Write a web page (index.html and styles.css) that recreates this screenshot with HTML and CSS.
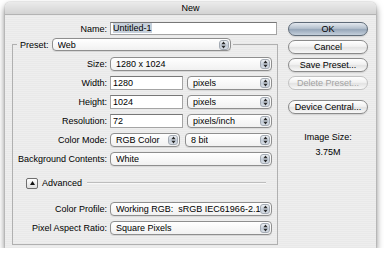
FILE: index.html
```html
<!DOCTYPE html>
<html lang="en">
<head>
    <meta charset="UTF-8">
    <title>New</title>
    <link rel="stylesheet" href="styles.css">
</head>
<body>

    <div class="window">
        <div class="titlebar">New</div>

        <div class="content">
            <div class="main">
                <div class="row name-row">
                    <label>Name:</label>
                    <div class="field wide"><span class="selected">Untitled-1</span></div>
                </div>

                <fieldset class="group">
                    <legend>
                        <label>Preset:</label>
                        <div class="select preset"><span>Web</span><i class="arrows"><svg width="5" height="8" viewBox="0 0 5 8"><path d="M2.5 0.5L4.6 3.2H0.4z M2.5 7.5L4.6 4.8H0.4z"/></svg></i></div>
                    </legend>

                    <div class="row">
                        <label>Size:</label>
                        <div class="select"><span>1280 x 1024</span><i class="arrows"><svg width="5" height="8" viewBox="0 0 5 8"><path d="M2.5 0.5L4.6 3.2H0.4z M2.5 7.5L4.6 4.8H0.4z"/></svg></i></div>
                    </div>
                    <div class="row">
                        <label>Width:</label>
                        <div class="pair">
                            <div class="field">1280</div>
                            <div class="select"><span>pixels</span><i class="arrows"><svg width="5" height="8" viewBox="0 0 5 8"><path d="M2.5 0.5L4.6 3.2H0.4z M2.5 7.5L4.6 4.8H0.4z"/></svg></i></div>
                        </div>
                    </div>
                    <div class="row">
                        <label>Height:</label>
                        <div class="pair">
                            <div class="field">1024</div>
                            <div class="select"><span>pixels</span><i class="arrows"><svg width="5" height="8" viewBox="0 0 5 8"><path d="M2.5 0.5L4.6 3.2H0.4z M2.5 7.5L4.6 4.8H0.4z"/></svg></i></div>
                        </div>
                    </div>
                    <div class="row">
                        <label>Resolution:</label>
                        <div class="pair">
                            <div class="field">72</div>
                            <div class="select"><span>pixels/inch</span><i class="arrows"><svg width="5" height="8" viewBox="0 0 5 8"><path d="M2.5 0.5L4.6 3.2H0.4z M2.5 7.5L4.6 4.8H0.4z"/></svg></i></div>
                        </div>
                    </div>
                    <div class="row">
                        <label>Color Mode:</label>
                        <div class="pair mode">
                            <div class="select"><span>RGB Color</span><i class="arrows"><svg width="5" height="8" viewBox="0 0 5 8"><path d="M2.5 0.5L4.6 3.2H0.4z M2.5 7.5L4.6 4.8H0.4z"/></svg></i></div>
                            <div class="select"><span>8 bit</span><i class="arrows"><svg width="5" height="8" viewBox="0 0 5 8"><path d="M2.5 0.5L4.6 3.2H0.4z M2.5 7.5L4.6 4.8H0.4z"/></svg></i></div>
                        </div>
                    </div>
                    <div class="row">
                        <label>Background Contents:</label>
                        <div class="select"><span>White</span><i class="arrows"><svg width="5" height="8" viewBox="0 0 5 8"><path d="M2.5 0.5L4.6 3.2H0.4z M2.5 7.5L4.6 4.8H0.4z"/></svg></i></div>
                    </div>

                    <div class="advanced">
                        <span class="disclosure"><svg width="5" height="4" viewBox="0 0 5 4"><path d="M2.5 0L5 4H0z"/></svg></span>
                        <span>Advanced</span>
                        <span class="rule"></span>
                    </div>

                    <div class="row">
                        <label>Color Profile:</label>
                        <div class="select"><span>Working RGB:&nbsp; sRGB IEC61966-2.1</span><i class="arrows"><svg width="5" height="8" viewBox="0 0 5 8"><path d="M2.5 0.5L4.6 3.2H0.4z M2.5 7.5L4.6 4.8H0.4z"/></svg></i></div>
                    </div>
                    <div class="row">
                        <label>Pixel Aspect Ratio:</label>
                        <div class="select"><span>Square Pixels</span><i class="arrows"><svg width="5" height="8" viewBox="0 0 5 8"><path d="M2.5 0.5L4.6 3.2H0.4z M2.5 7.5L4.6 4.8H0.4z"/></svg></i></div>
                    </div>
                </fieldset>
            </div>

            <div class="side">
                <div class="btn default">OK</div>
                <div class="btn">Cancel</div>
                <div class="btn">Save Preset...</div>
                <div class="btn disabled">Delete Preset...</div>
                <div class="btn central">Device Central...</div>

                <div class="image-size">
                    <p>Image Size:</p>
                    <p>3.75M</p>
                </div>
            </div>
        </div>
    </div>

</body>
</html>
```

FILE: styles.css
```css
body {
    margin: 0;
    background: #fff;
    font-family: "Liberation Sans", Arial, sans-serif;
    font-size: 9px;
    color: #000;
}
.window {
    margin: 2px 0 0 5px;
    width: 371px;
    height: 246px;
    border-radius: 5px 5px 0 0;
    background: repeating-linear-gradient(#eeeeee 0 1px, #e9e9e9 1px 2px);
    box-shadow: 0 4px 7px rgba(0, 0, 0, 0.55), 0 0 1px rgba(0, 0, 0, 0.5);
    overflow: hidden;
}
.titlebar {
    height: 13px;
    line-height: 13px;
    text-align: center;
    background: linear-gradient(#ebebeb, #d3d3d3);
    border-bottom: 1px solid #b3b3b3;
    box-sizing: border-box;
}
.content {
    display: flex;
    padding: 7px 0 0 7px;
}
.main {
    width: 266px;
}
.row {
    display: grid;
    grid-template-columns: 94px 162px;
    column-gap: 3px;
    align-items: center;
    height: 14px;
    margin-bottom: 5px;
}
.row label {
    text-align: right;
    white-space: nowrap;
}
.name-row {
    grid-template-columns: 95px 167px;
    height: 13px;
    margin-bottom: 0;
}
.field {
    height: 14px;
    line-height: 12px;
    box-sizing: border-box;
    border: 1px solid #a4a4a4;
    border-top-color: #777;
    background: #fff;
    padding-left: 2px;
}
.field.wide {
    height: 13px;
    line-height: 11px;
}
.selected {
    background: #c7d0db;
}
.group {
    margin: 3px 0 0;
    padding: 6px 5px 4px 0;
    border: 1px solid #b0b0b0;
    width: 266px;
    box-sizing: border-box;
}
.group legend {
    display: flex;
    align-items: center;
    gap: 3px;
    margin-left: 4px;
    padding: 0 2px 0 3px;
}
.select {
    display: flex;
    align-items: center;
    height: 14px;
    box-sizing: border-box;
    border: 1px solid #8e8e8e;
    border-radius: 4px;
    background: linear-gradient(#ffffff, #f1f1f1);
    padding-left: 5px;
    box-shadow: 0 1px 0 rgba(0, 0, 0, 0.08);
}
.select span {
    white-space: nowrap;
    overflow: hidden;
}
.preset {
    width: 179px;
    height: 13px;
}
.arrows {
    margin-left: auto;
    width: 10px;
    height: 10px;
    margin-right: 1px;
    display: flex;
    align-items: center;
    justify-content: center;
    border-radius: 3px;
    background: linear-gradient(#eef1f5, #c3ccd7 55%, #d8dee6);
    border: 1px solid #a3aab3;
    box-sizing: border-box;
}
.arrows svg {
    fill: #2a2a2a;
}
.pair {
    display: grid;
    grid-template-columns: 73px 1fr;
    gap: 4px;
}
.pair.mode {
    grid-template-columns: 70px 1fr;
    gap: 5px;
}
.advanced {
    display: flex;
    align-items: center;
    gap: 4px;
    height: 12px;
    margin: 11px 6px 13px 13px;
}
.disclosure {
    width: 12px;
    height: 11px;
    box-sizing: border-box;
    border: 1px solid #6f6f6f;
    border-radius: 2px;
    background: linear-gradient(#ffffff, #dedede);
    display: flex;
    align-items: center;
    justify-content: center;
}
.disclosure svg {
    fill: #111;
}
.rule {
    flex: 1;
    height: 1px;
    margin-left: 1px;
    background: #bdbdbd;
    border-bottom: 1px solid #f8f8f8;
}
.side {
    width: 80px;
    margin-left: 10px;
    display: flex;
    flex-direction: column;
    gap: 4px;
}
.btn {
    height: 14px;
    line-height: 12px;
    box-sizing: border-box;
    text-align: center;
    border: 1px solid #8a8a8a;
    border-radius: 7px;
    background: linear-gradient(#ffffff, #f1f1f1 45%, #e3e3e3 55%, #f8f8f8);
    box-shadow: 0 1px 1px rgba(0, 0, 0, 0.12);
}
.btn.default {
    border-color: #5f6b78;
    background: linear-gradient(#e4e9ef, #b4c0cd 45%, #97a7b9 55%, #c4cfdb);
}
.btn.disabled {
    color: #a3a3a3;
    border-color: #c2c2c2;
    box-shadow: none;
}
.btn.central {
    margin-top: 6px;
}
.image-size {
    margin-top: 14px;
    text-align: center;
}
.image-size p {
    margin: 0 0 5px;
}
```
